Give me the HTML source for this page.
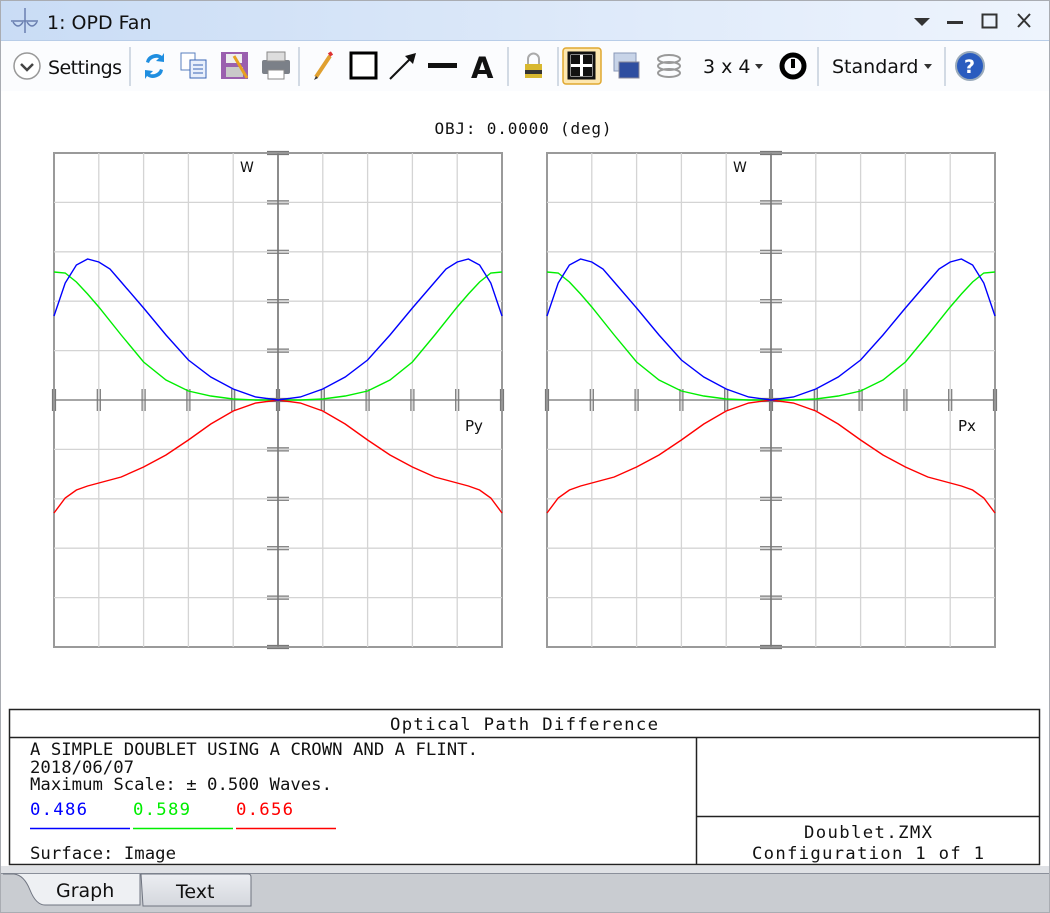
<!DOCTYPE html>
<html><head><meta charset="utf-8"><style>
body{margin:0;width:1050px;height:913px;overflow:hidden;background:#fff;font-family:"Liberation Sans",sans-serif}
svg{display:block}
.m{font-family:"DejaVu Sans Mono","Liberation Mono",monospace;font-size:17.3px}
.u{font-family:"DejaVu Sans","Liberation Sans",sans-serif}
</style></head><body>
<svg width="1050" height="913" xmlns="http://www.w3.org/2000/svg">
<defs>
<linearGradient id="tb" x1="0" y1="0" x2="1" y2="0"><stop offset="0" stop-color="#c9dcf5"/><stop offset="1" stop-color="#eef4fd"/></linearGradient>
<linearGradient id="tab" x1="0" y1="0" x2="0" y2="1"><stop offset="0" stop-color="#eceef2"/><stop offset="1" stop-color="#d4d7dd"/></linearGradient>
</defs>
<rect width="1050" height="913" fill="#a9acb2"/>
<rect x="1" y="1" width="1048" height="911" fill="#fff"/>
<rect x="1" y="1" width="1048" height="39" fill="url(#tb)"/>
<line x1="1" y1="40.5" x2="1049" y2="40.5" stroke="#b8cde8"/>
<g stroke="#6a7fb0" stroke-width="1.5" fill="none"><line x1="25" y1="8" x2="25" y2="33"/><line x1="11" y1="21" x2="38" y2="21"/><path d="M13 22 Q18 30 23 22 M27 22 Q32 30 37 22"/></g>
<text x="47" y="29" font-size="19" fill="#111" class="u">1: OPD Fan</text>
<path d="M914 18 L930 18 L922 26 Z" fill="#333"/>
<rect x="947" y="21" width="16" height="3" fill="#333"/>
<rect x="982.5" y="14.5" width="14" height="13" fill="none" stroke="#333" stroke-width="2"/>
<path d="M1018 14 L1030 27 M1030 14 L1018 27" stroke="#333" stroke-width="2"/>
<rect x="1" y="41" width="1048" height="50" fill="#fbfcfe"/>
<circle cx="27" cy="66" r="13" fill="#fff" stroke="#999" stroke-width="1.5"/>
<path d="M21 64 L27 70 L33 64" stroke="#444" stroke-width="2.5" fill="none"/>
<text x="48" y="74" font-size="19" fill="#111" class="u" textLength="74">Settings</text>
<g stroke="#c5cfdc" stroke-width="1.5"><line x1="130" y1="47" x2="130" y2="86"/><line x1="299" y1="47" x2="299" y2="86"/><line x1="508" y1="47" x2="508" y2="86"/><line x1="558" y1="47" x2="558" y2="86"/><line x1="818" y1="47" x2="818" y2="86"/><line x1="945" y1="47" x2="945" y2="86"/></g>
<path d="M146 62 A10 9 0 0 1 162 56 L164 53 L164 62 L156 61 L159 58 A8 7 0 0 0 149 63 Z" fill="#1f8ee0"/>
<path d="M163 70 A10 9 0 0 1 147 76 L145 79 L145 70 L153 71 L150 74 A8 7 0 0 0 160 69 Z" fill="#1f8ee0"/>
<rect x="181" y="53" width="14" height="17" fill="#fff" stroke="#5a7fbf"/><rect x="190" y="60" width="16" height="18" fill="#e8effb" stroke="#3a66b5"/>
<g stroke="#3a66b5"><line x1="193" y1="65" x2="203" y2="65"/><line x1="193" y1="69" x2="203" y2="69"/><line x1="193" y1="73" x2="203" y2="73"/></g>
<rect x="221" y="52" width="27" height="27" fill="#9a5fae"/><rect x="226" y="54" width="16" height="9" fill="#eee"/><rect x="226" y="67" width="17" height="10" fill="#c9c9c9"/>
<path d="M234 56 L247 78" stroke="#e8a020" stroke-width="3"/>
<rect x="262" y="60" width="28" height="14" rx="2" fill="#7b8088"/><rect x="267" y="52" width="18" height="9" fill="#ddd" stroke="#888"/><rect x="268" y="70" width="16" height="9" fill="#fff" stroke="#888"/>
<path d="M316 77 L330 56" stroke="#e0a030" stroke-width="4"/><path d="M314 80 L316 76 L318 78Z" fill="#333"/><path d="M329 55 L332 53" stroke="#d33" stroke-width="4"/>
<rect x="351" y="53" width="25" height="25" fill="#fff" stroke="#000" stroke-width="3"/>
<path d="M390 79 L413 56" stroke="#111" stroke-width="2"/><path d="M416 53 L405 56 L413 64Z" fill="#111"/>
<rect x="428" y="63" width="29" height="5" fill="#111"/>
<text x="471" y="78" font-size="29" font-weight="bold" fill="#111" class="u">A</text>
<rect x="525" y="64" width="17" height="14" fill="#d8b830"/><path d="M528 64 V59 A5.5 5.5 0 0 1 539 59 V64" stroke="#aaa" stroke-width="2" fill="none"/><rect x="525" y="70" width="17" height="4" fill="#333"/>
<rect x="563" y="48" width="38" height="36" rx="3" fill="#fde7b0" stroke="#e0a830" stroke-width="1.5"/>
<rect x="569" y="53" width="25" height="25" fill="#fff" stroke="#111" stroke-width="3"/><rect x="571" y="55" width="9" height="9" fill="#111"/><rect x="583" y="55" width="9" height="9" fill="#111"/><rect x="571" y="67" width="9" height="9" fill="#111"/><rect x="583" y="67" width="9" height="9" fill="#111"/>
<rect x="614" y="53" width="22" height="18" fill="#c8d4e8" stroke="#8898b8"/><rect x="619" y="62" width="20" height="16" fill="#2f4ea0" stroke="#889"/>
<g fill="none" stroke="#999" stroke-width="2"><ellipse cx="669" cy="59" rx="11" ry="4"/><ellipse cx="669" cy="66" rx="11" ry="4"/><ellipse cx="669" cy="73" rx="11" ry="4"/></g>
<text x="703" y="73" font-size="19" fill="#111" class="u">3 x 4</text>
<path d="M755 64 L763 64 L759 69Z" fill="#333"/>
<circle cx="793" cy="66" r="11" fill="none" stroke="#000" stroke-width="5"/><path d="M793 59 V68" stroke="#000" stroke-width="4"/>
<text x="832" y="73" font-size="19" fill="#111" class="u">Standard</text>
<path d="M924 64 L932 64 L928 69Z" fill="#333"/>
<circle cx="970" cy="66" r="14" fill="#2a5cbf" stroke="#9ab" stroke-width="2"/>
<text x="964" y="73" font-size="19" font-weight="bold" fill="#fff" class="u">?</text>

<text x="523" y="134" class="m" text-anchor="middle" fill="#111" textLength="177" style="font-size:16px">OBJ: 0.0000 (deg)</text>

<g id="p1"></g><g id="p2"></g>

<g fill="none" stroke="#222" stroke-width="1.5">
<rect x="9.5" y="709.5" width="1030" height="155"/>
<line x1="9.5" y1="737.5" x2="1039.5" y2="737.5"/>
<line x1="696.5" y1="737.5" x2="696.5" y2="864.5"/>
<line x1="696.5" y1="816.5" x2="1039.5" y2="816.5"/>
</g>
<g class="m" fill="#111">
<text x="524" y="730" text-anchor="middle" textLength="268">Optical Path Difference</text>
<text x="30" y="755" textLength="448">A SIMPLE DOUBLET USING A CROWN AND A FLINT.</text>
<text x="30" y="773" textLength="104">2018/06/07</text>
<text x="30" y="790" textLength="302">Maximum Scale: ± 0.500 Waves.</text>
<text x="30" y="815" fill="#0000ff" textLength="57">0.486</text>
<text x="133" y="815" fill="#00ee00" textLength="57">0.589</text>
<text x="236" y="815" fill="#ff0000" textLength="57">0.656</text>
<text x="30" y="859" textLength="146">Surface: Image</text>
<text x="868" y="838" text-anchor="middle" textLength="128">Doublet.ZMX</text>
<text x="868" y="859" text-anchor="middle" textLength="232">Configuration 1 of 1</text>
</g>
<line x1="30" y1="828.5" x2="130" y2="828.5" stroke="#0000ff" stroke-width="1.5"/>
<line x1="133" y1="828.5" x2="233" y2="828.5" stroke="#00ee00" stroke-width="1.5"/>
<line x1="236" y1="828.5" x2="336" y2="828.5" stroke="#ff0000" stroke-width="1.5"/>

<rect x="1" y="866" width="1048" height="7" fill="#dfe1e5"/>
<rect x="1" y="873" width="1048" height="39" fill="#c9ccd1"/>
<line x1="1" y1="873.5" x2="1049" y2="873.5" stroke="#8a8f9a"/>
<path d="M141 874 L248 874 Q251 874 251 877 L251 906 L143 906 Z" fill="url(#tab)" stroke="#6f7480"/>
<path d="M3 874 L14 874 Q24 875 30 890 Q36 905 45 905 L140 905 L140 874" fill="#eef0f3" stroke="#6f7480"/>
<text x="56" y="897" font-size="19" fill="#111" class="u">Graph</text>
<text x="176" y="898" font-size="19" fill="#111" class="u">Text</text>
</svg>
<script>
function pl(pts,col){return '<polyline fill="none" stroke="'+col+'" stroke-width="1.4" points="'+pts+'"/>';}
const B=[[0,400],[.1,397],[.2,389],[.3,377],[.4,360],[.5,335],[.6,308],[.7,282],[.75,269],[.8,262],[.85,259],[.9,265],[.95,283],[1,316]];
const G=[[0,400],[.1,400],[.2,399],[.3,396],[.4,391],[.5,380],[.6,362],[.7,335],[.8,307],[.85,294],[.9,282],[.95,273],[1,272]];
const R=[[0,400],[.1,403],[.2,411],[.3,424],[.4,440],[.5,455],[.6,467],[.7,477],[.8,483],[.85,486],[.9,490],[.95,498],[1,513]];
function plot(id,L,lab){const cx=L+224;let s='';const R1=L+448;
 s+='<rect x="'+L+'" y="153" width="448" height="494" fill="#fff" stroke="#9a9a9a" stroke-width="2"/>';
 for(let i=1;i<10;i++){const x=L+i*44.8;s+='<line x1="'+x+'" y1="153" x2="'+x+'" y2="647" stroke="#d4d4d4" stroke-width="1.3"/>';const y=153+i*49.4;s+='<line x1="'+L+'" y1="'+y+'" x2="'+R1+'" y2="'+y+'" stroke="#d4d4d4" stroke-width="1.3"/>';}
 s+='<line x1="'+cx+'" y1="153" x2="'+cx+'" y2="647" stroke="#8c8c8c" stroke-width="2"/>';
 s+='<line x1="'+L+'" y1="400" x2="'+R1+'" y2="400" stroke="#8c8c8c" stroke-width="1.5"/>';
 for(let i=0;i<=10;i++){const x=L+i*44.8;s+='<path d="M'+(x-1.5)+' 389V411M'+(x+1.5)+' 389V411" stroke="#777" stroke-width="1.2"/>';const y=153+i*49.4;s+='<path d="M'+(cx-11)+' '+(y-1.5)+'H'+(cx+11)+'M'+(cx-11)+' '+(y+1.5)+'H'+(cx+11)+'" stroke="#777" stroke-width="1.2"/>';}
 [[G,'#00ee00'],[R,'#ff0000'],[B,'#0000ff']].forEach(([A,c])=>{let pts=[];for(let i=A.length-1;i>0;i--)pts.push((cx-A[i][0]*224).toFixed(1)+','+A[i][1]);for(let i=0;i<A.length;i++)pts.push((cx+A[i][0]*224).toFixed(1)+','+A[i][1]);s+=pl(pts.join(' '),c);});
 s+='<text x="'+(cx-38)+'" y="172" font-family="DejaVu Sans,sans-serif" font-size="14" fill="#111">W</text>';
 s+='<text x="'+(cx+187)+'" y="431" font-family="DejaVu Sans,sans-serif" font-size="15" fill="#111">'+lab+'</text>';
 document.getElementById(id).innerHTML=s;}
plot('p1',54,'Py');plot('p2',547,'Px');
</script>
</body></html>
